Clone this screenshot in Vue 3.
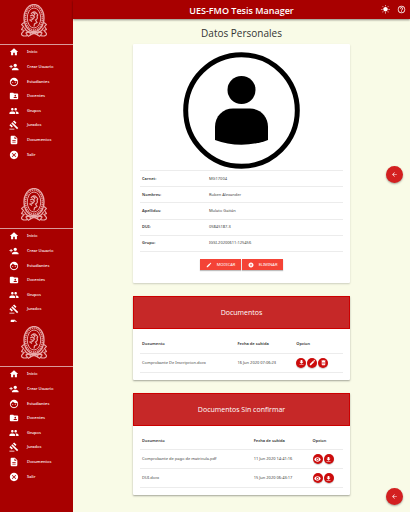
<script setup>
const icons = {
  home: 'M10 20v-6h4v6h5v-8h3L12 3 2 12h3v8z',
  personAdd: 'M15 12c2.21 0 4-1.79 4-4s-1.79-4-4-4-4 1.79-4 4 1.79 4 4 4zm-9-2V7H4v3H1v2h3v3h2v-3h3v-2H6zm9 4c-2.67 0-8 1.34-8 4v2h16v-2c0-2.66-5.33-4-8-4z',
  face: 'M9 11.75c-.69 0-1.25.56-1.25 1.25s.56 1.25 1.25 1.25 1.25-.56 1.25-1.25-.56-1.25-1.25-1.25zm6 0c-.69 0-1.25.56-1.25 1.25s.56 1.25 1.25 1.25 1.25-.56 1.25-1.25-.56-1.25-1.25-1.25zM12 2C6.48 2 2 6.48 2 12s4.48 10 10 10 10-4.48 10-10S17.52 2 12 2zm0 18c-4.41 0-8-3.59-8-8 0-.29.02-.58.05-.86 2.36-1.05 4.23-2.98 5.21-5.37C11.07 8.33 14.05 10 17.42 10c.78 0 1.53-.09 2.25-.26.21.71.33 1.47.33 2.26 0 4.41-3.59 8-8 8z',
  folder: 'M20 6h-8l-2-2H4c-1.1 0-1.99.9-1.99 2L2 18c0 1.1.9 2 2 2h16c1.1 0 2-.9 2-2V8c0-1.1-.9-2-2-2zm-5 3c1.1 0 2 .9 2 2s-.9 2-2 2-2-.9-2-2 .9-2 2-2zm4 8h-8v-1c0-1.33 2.67-2 4-2s4 .67 4 2v1z',
  people: 'M16 11c1.66 0 2.99-1.34 2.99-3S17.66 5 16 5c-1.66 0-3 1.34-3 3s1.34 3 3 3zm-8 0c1.66 0 2.99-1.34 2.99-3S9.66 5 8 5C6.34 5 5 6.34 5 8s1.34 3 3 3zm0 2c-2.33 0-7 1.17-7 3.5V19h14v-2.5c0-2.33-4.67-3.5-7-3.5zm8 0c-.29 0-.62.02-.97.05 1.16.84 1.97 1.97 1.97 3.45V19h6v-2.5c0-2.33-4.67-3.5-7-3.5z',
  gavel: 'M1 21h12v2H1zM5.245 8.07l2.83-2.827 14.14 14.142-2.828 2.828zM12.317 1l5.657 5.656-2.83 2.83-5.654-5.66zM3.825 9.485l5.657 5.657-2.828 2.828-5.657-5.657z',
  description: 'M14 2H6c-1.1 0-1.99.9-1.99 2L4 20c0 1.1.89 2 1.99 2H18c1.1 0 2-.9 2-2V8l-6-6zm2 16H8v-2h8v2zm0-4H8v-2h8v2zm-3-5V3.5L18.5 9H13z',
  cancel: 'M12 2C6.47 2 2 6.47 2 12s4.47 10 10 10 10-4.47 10-10S17.53 2 12 2zm5 13.59L15.59 17 12 13.41 8.41 17 7 15.59 10.59 12 7 8.41 8.41 7 12 10.59 15.59 7 17 8.41 13.41 12 17 15.59z',
  edit: 'M3 17.25V21h3.75L17.81 9.94l-3.75-3.75L3 17.25zM20.71 7.04c.39-.39.39-1.02 0-1.41l-2.34-2.34c-.39-.39-1.02-.39-1.41 0l-1.83 1.83 3.75 3.75 1.83-1.83z',
  download: 'M19 9h-4V3H9v6H5l7 7 7-7zM5 18v2h14v-2H5z',
  trash: 'M6 19c0 1.1.9 2 2 2h8c1.1 0 2-.9 2-2V7H6v12zm3-9h2v8H9zm4 0h2v8h-2zM19 4h-3.5l-1-1h-5l-1 1H5v2h14V4z',
  eye: 'M12 4.5C7 4.5 2.73 7.61 1 12c1.73 4.39 6 7.5 11 7.5s9.27-3.11 11-7.5c-1.73-4.39-6-7.5-11-7.5zM12 17c-2.76 0-5-2.24-5-5s2.24-5 5-5 5 2.24 5 5-2.24 5-5 5zm0-8c-1.66 0-3 1.34-3 3s1.34 3 3 3 3-1.34 3-3-1.34-3-3-3z',
  sun: 'M6.76 4.84l-1.8-1.79-1.41 1.41 1.79 1.79 1.42-1.41zM4 10.5H1v2h3v-2zm9-9.95h-2V3.5h2V.55zm7.45 3.91l-1.41-1.41-1.79 1.79 1.41 1.41 1.79-1.79zm-3.21 13.7l1.79 1.8 1.41-1.41-1.8-1.79-1.4 1.4zM20 10.5v2h3v-2h-3zm-8-5c-3.31 0-6 2.69-6 6s2.69 6 6 6 6-2.69 6-6-2.69-6-6-6zm-1 16.95h2V19.5h-2v2.95zm-7.45-3.91l1.41 1.41 1.79-1.8-1.41-1.41-1.79 1.8z',
  help: 'M11 18h2v-2h-2v2zm1-16C6.48 2 2 6.48 2 12s4.48 10 10 10 10-4.48 10-10S17.52 2 12 2zm0 18c-4.41 0-8-3.59-8-8s3.59-8 8-8 8 3.59 8 8-3.59 8-8 8zm0-14c-2.21 0-4 1.79-4 4h2c0-1.1.9-2 2-2s2 .9 2 2c0 2-3 1.75-3 5h2c0-2.25 3-2.5 3-5 0-2.21-1.79-4-4-4z',
  back: 'M20 11H7.83l5.59-5.59L12 4l-8 8 8 8 1.41-1.41L7.83 13H20v-2z',
}

const menu = [
  { icon: 'home', label: 'Inicio' },
  { icon: 'personAdd', label: 'Crear Usuario' },
  { icon: 'face', label: 'Estudiantes' },
  { icon: 'folder', label: 'Docentes' },
  { icon: 'people', label: 'Grupos' },
  { icon: 'gavel', label: 'Jurados' },
  { icon: 'description', label: 'Documentos' },
  { icon: 'cancel', label: 'Salir' },
]
const panels = [
  { name: 'first', items: menu },
  { name: 'second', items: [...menu.slice(0, 6), { icon: 'description', label: '' }] },
  { name: 'third', items: menu },
]

const details = [
  ['Carnet:', 'MG17004'],
  ['Nombres:', 'Ruben Alexander'],
  ['Apellidos:', 'Mulato Gaitán'],
  ['DUI:', '05845187-3'],
  ['Grupo:', 'IGSI-20200611:125456'],
]

const actionNames = { download: 'Descargar', edit: 'Editar', trash: 'Borrar', eye: 'Ver' }

const lists = [
  {
    title: 'Documentos',
    kind: 'confirmed',
    rows: [
      { name: 'Comprobante De Inscripcion.docx', date: '16 Jun 2020 07:06:23', actions: ['download', 'edit', 'trash'] },
    ],
  },
  {
    title: 'Documentos Sin confirmar',
    kind: 'pending',
    rows: [
      { name: 'Comprobante de pago de matricula.pdf', date: '11 Jun 2020 14:41:16', actions: ['eye', 'download'] },
      { name: 'DUI.docx', date: '15 Jun 2020 06:43:17', actions: ['eye', 'download'] },
    ],
  },
]
</script>

<template>
  <div class="layout">
    <aside class="sidebar">
      <nav v-for="panel in panels" :key="panel.name" class="panel" :class="panel.name">
        <div class="brand">
          <svg class="crest" viewBox="0 0 52 66" fill="none" stroke="#e8a9a9" aria-hidden="true">
            <ellipse cx="26" cy="28" rx="20" ry="27" stroke-width="2.6" />
            <ellipse cx="26" cy="28" rx="17" ry="24" stroke-width="3.4" stroke-dasharray="2.6 1.4" stroke="#dc8f8f" />
            <ellipse cx="26" cy="28" rx="13.500" ry="20" stroke-width="2" />
            <path d="M20 20c3-5 9-6 11-1 3 1 3 4 1 5 2 4 0 7-3 8l3 5-5 3-1 5M18 24l5-2 4 4-4 5-5 1 4 3M24 17l4 3-2 3M19 27l6 2" stroke-width="2.4" />
            <path d="M6 37l-5 4 4 4-4 6 5 2-5 6c-1 5 7 6 12 4l-3-5 6-2 4 5-6 4M46 37l5 4-4 4 4 6-5 2 5 6c1 5-7 6-12 4l3-5-6-2-4 5 6 4" stroke-width="2.4" />
            <path d="M7 47c3 8 9 11 19 9 10 2 16-1 19-9M10 57c8-3 9 2 16 2s8-5 16-2M18 62l8-3 8 3" stroke-width="2.5" />
            <path d="M8 42l4 5M44 42l-4 5M26 52v8" stroke-width="1.8" />
          </svg>
        </div>
        <ul class="menu">
          <li v-for="item in panel.items" :key="item.icon">
            <a href="#" class="menu-link">
              <svg class="menu-icon" viewBox="0 0 24 24" aria-hidden="true"><path :d="icons[item.icon]" /></svg>
              <span v-if="item.label">{{ item.label }}</span>
            </a>
          </li>
        </ul>
      </nav>
    </aside>

    <div class="page">
      <header class="topbar">
        <h1>UES-FMO Tesis Manager</h1>
        <div class="tools">
          <button type="button" class="tool" aria-label="Tema"><svg viewBox="0 0 24 24"><path :d="icons.sun" /></svg></button>
          <button type="button" class="tool" aria-label="Ayuda"><svg viewBox="0 0 24 24"><path :d="icons.help" /></svg></button>
        </div>
      </header>

      <main class="content">
        <h2>Datos Personales</h2>

        <section class="card profile">
          <svg class="avatar" viewBox="0 0 117 117" aria-hidden="true">
            <circle cx="58.5" cy="58.5" r="55.8" fill="none" stroke="#000" stroke-width="5" />
            <circle cx="58.5" cy="38" r="14" />
            <path d="M32 88V75c0-11 8-18.500 18-18.500h17c10 0 18 7.500 18 18.500v13c-8 3-17 4.700-26.500 4.700S40 91 32 88z" />
          </svg>
          <table class="details">
            <tbody>
              <tr v-for="[label, value] in details" :key="label">
                <th scope="row">{{ label }}</th>
                <td>{{ value }}</td>
              </tr>
            </tbody>
          </table>
          <div class="buttons">
            <button type="button" class="btn"><svg viewBox="0 0 24 24" aria-hidden="true"><path :d="icons.edit" /></svg>MODICAR</button>
            <button type="button" class="btn"><svg viewBox="0 0 24 24" aria-hidden="true"><path :d="icons.cancel" /></svg>ELIMINAR</button>
          </div>
        </section>

        <section v-for="list in lists" :key="list.kind" class="card" :class="list.kind">
          <h3>{{ list.title }}</h3>
          <div class="card-body">
            <table class="files">
              <colgroup><col class="col-name" /><col class="col-date" /><col /></colgroup>
              <thead>
                <tr><th>Documento</th><th>Fecha de subida</th><th>Opcion</th></tr>
              </thead>
              <tbody>
                <tr v-for="row in list.rows" :key="row.name">
                  <td>{{ row.name }}</td>
                  <td>{{ row.date }}</td>
                  <td>
                    <div class="actions">
                      <button v-for="action in row.actions" :key="action" type="button" class="round" :aria-label="actionNames[action]">
                        <svg viewBox="0 0 24 24"><path :d="icons[action]" /></svg>
                      </button>
                    </div>
                  </td>
                </tr>
              </tbody>
            </table>
          </div>
        </section>
      </main>
    </div>

    <button type="button" class="fab fab-upper" aria-label="Regresar"><svg viewBox="0 0 24 24"><path :d="icons.back" /></svg></button>
    <button type="button" class="fab fab-lower" aria-label="Volver"><svg viewBox="0 0 24 24"><path :d="icons.back" /></svg></button>
  </div>
</template>

<style>
body {
  margin: 0;
  background: #f9fbe7;
}
</style>

<style scoped>
.layout {
  position: relative;
  display: grid;
  grid-template-columns: 73px 1fr;
  min-height: 100vh;
  font-family: "Noto Sans", "Open Sans", sans-serif;
  font-size: 4px;
  line-height: 6px;
  color: #444;
}
* {
  box-sizing: border-box;
}
svg {
  display: block;
}
button {
  padding: 0;
  border: 0;
  font: inherit;
  color: #fff;
  cursor: pointer;
}
button svg {
  fill: #fff;
}

.sidebar {
  display: flex;
  flex-direction: column;
  background: #a80000;
}
.panel {
  overflow: hidden;
}
.first {
  height: 184px;
}
.second {
  height: 138px;
}
.brand {
  height: 45px;
  padding: 4px 5px 0 0;
  border-bottom: 1px solid #d99a9a;
}
.crest {
  height: 33px;
  margin: 0 auto;
}
.menu {
  display: grid;
  grid-template-rows: repeat(8, 1fr);
  height: 117px;
  margin: 0;
  padding: 0;
  list-style: none;
}
.menu-link {
  display: flex;
  align-items: center;
  gap: 8px;
  height: 100%;
  padding-left: 9px;
  color: #fff;
  font-weight: 500;
  text-decoration: none;
}
.menu-icon {
  width: 10px;
  height: 10px;
  fill: #fff;
}

.page {
  min-width: 0;
}
.topbar {
  position: relative;
  display: flex;
  align-items: center;
  justify-content: center;
  height: 19px;
  background: #a80000;
  box-shadow: 0 1px 2px rgba(0, 0, 0, 0.45);
}
h1,
h2,
h3 {
  font-family: "Open Sans", "Noto Sans", sans-serif;
}
h1 {
  margin: 0;
  padding-top: 2px;
  color: #fff;
  font-size: 9px;
  font-weight: 600;
  line-height: 12px;
}
.tools {
  position: absolute;
  top: 5px;
  right: 4px;
  display: flex;
  gap: 7px;
}
.tool {
  width: 9px;
  height: 9px;
  background: none;
}

.content {
  padding: 7px 60px 4px;
}
h2 {
  margin: 0 0 4px;
  color: #333;
  font-size: 10px;
  font-weight: 400;
  line-height: 14px;
  text-align: center;
}
.card {
  margin-bottom: 13px;
  background: #fff;
  border-radius: 1px;
  box-shadow: 0 1px 2px rgba(0, 0, 0, 0.35);
}
.profile {
  padding: 8px 7px 13px;
  box-shadow: 0 1px 2px rgba(0, 0, 0, 0.18);
}
.avatar {
  width: 117px;
  margin: 0 auto 1px;
}

table {
  width: 100%;
  border-collapse: collapse;
  table-layout: fixed;
}
th,
td {
  padding: 0 2px;
  text-align: left;
  white-space: nowrap;
}
th {
  color: #333;
  font-weight: 600;
}
tr {
  border-bottom: 1px solid #ececec;
}
.details {
  height: 82px;
  border-top: 1px solid #ececec;
}
.details th {
  width: 33%;
}
.buttons {
  display: flex;
  justify-content: center;
  gap: 1px;
  margin-top: 7px;
}
.btn {
  display: flex;
  align-items: center;
  justify-content: center;
  gap: 5px;
  width: 41px;
  height: 11px;
  background: #f44336;
  box-shadow: 0 1px 1px rgba(0, 0, 0, 0.25);
}
.btn svg {
  width: 6px;
  height: 6px;
}

h3 {
  margin: 0;
  border: 1px solid #cc0000;
  background: #c62828;
  color: #fff;
  font-size: 7px;
  font-weight: 500;
  line-height: 31px;
  text-align: center;
}
.card-body {
  padding: 7px;
}
.files th {
  height: 17px;
}
.files td {
  height: 19px;
}
.confirmed .col-name {
  width: 47%;
}
.pending .col-name {
  width: 55%;
}
.col-date {
  width: 29%;
}
.actions {
  display: flex;
  gap: 1px;
}
.round {
  display: grid;
  place-items: center;
  width: 10px;
  height: 10px;
  border-radius: 50%;
  background: #cc0c0c;
  box-shadow: 0 1px 1px rgba(0, 0, 0, 0.2);
}
.round svg {
  width: 7px;
  height: 7px;
}

.fab {
  position: absolute;
  right: 7px;
  display: grid;
  place-items: center;
  width: 17px;
  height: 17px;
  border-radius: 50%;
  background: #d32020;
  box-shadow: 0 1px 2px rgba(0, 0, 0, 0.35);
}
.fab svg {
  width: 7px;
  height: 7px;
}
.fab-upper {
  top: 166px;
}
.fab-lower {
  bottom: 7px;
}
</style>
